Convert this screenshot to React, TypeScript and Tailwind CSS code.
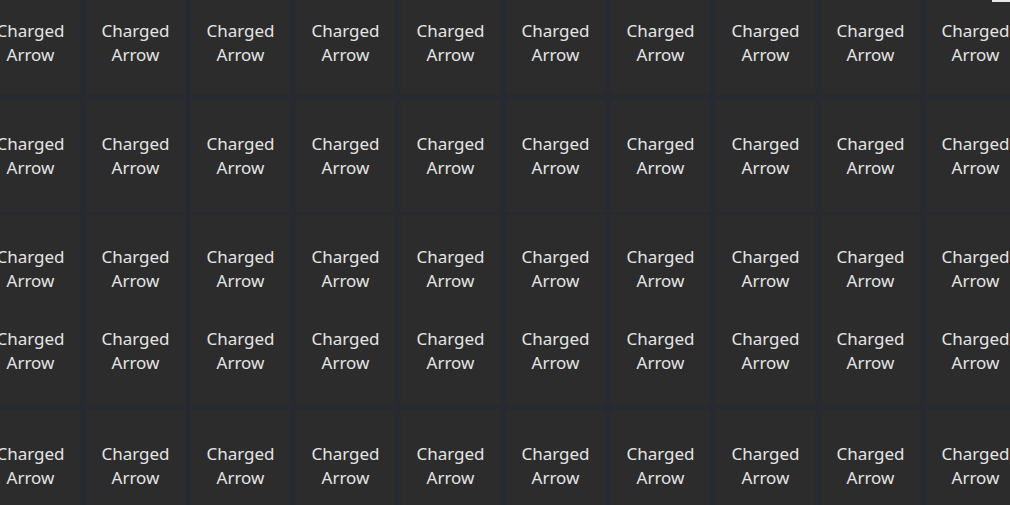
import React from 'react';

const COLS = 10;

const Label = () => (
  <div className="flex flex-col items-center text-[17px] leading-[24px] text-[#e4e4e4] whitespace-nowrap">
    <span>Charged</span>
    <span>Arrow</span>
  </div>
);

const TileRow: React.FC<{ className: string; double?: boolean }> = ({ className, double }) => (
  <div className={`flex gap-[6px] ${className}`}>
    {Array.from({ length: COLS }).map((_, i) => (
      <div
        key={i}
        className={`w-[99px] shrink-0 bg-[#2c2c2c] flex flex-col items-center justify-center ${double ? 'gap-[34px]' : ''}`}
      >
        <Label />
        {double && <Label />}
      </div>
    ))}
  </div>
);

export default function App() {
  return (
    <div
      className="relative w-[1010px] h-[505px] overflow-hidden bg-[#272a30]"
      style={{ fontFamily: '"Noto Sans", "Open Sans", sans-serif' }}
    >
      <div className="flex flex-col -mt-[9px] -ml-[19px]">
        <TileRow className="h-[103px] mb-[6px]" />
        <TileRow className="h-[112px] mb-[3px]" />
        <TileRow className="h-[190px] mb-[5px]" double />
        <TileRow className="h-[112px]" />
      </div>
      {/* stray highlight in top-right corner */}
      <div className="absolute top-0 right-0 w-[18px] h-[2px] bg-[#e8e8e8]" />
    </div>
  );
}
